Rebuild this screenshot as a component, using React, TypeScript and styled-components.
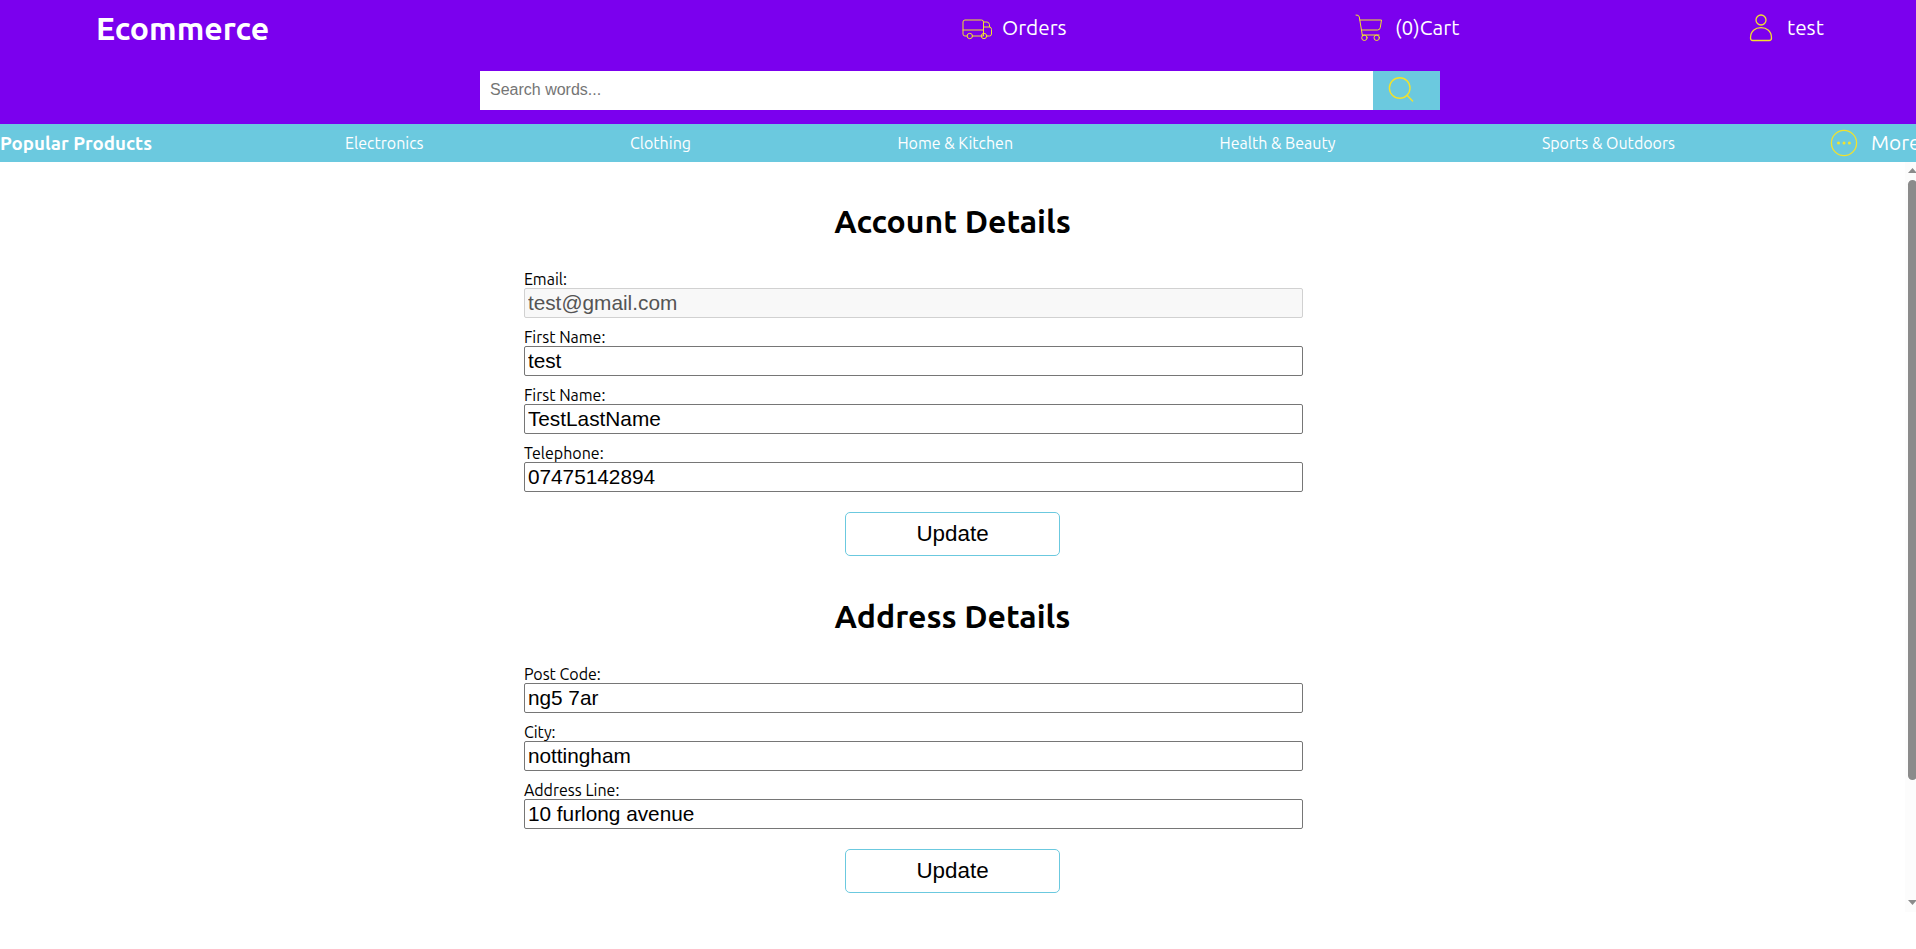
import React from "react";
import styled, { createGlobalStyle } from "styled-components";

const purple = "#7b00ee";
const sky = "#6bc9df";
const yellow = "#f2e22c";

const GlobalStyle = createGlobalStyle`
  * { box-sizing: border-box; }
  body {
    margin: 0;
    background: #fff;
    overflow: hidden;
    font-family: Ubuntu, "Noto Sans", sans-serif;
    font-size: 16px;
  }
`;

const Page = styled.div`
  display: flex;
  flex-direction: column;
  height: 100vh;
  overflow: hidden;
`;

const Header = styled.header`
  height: 124px;
  flex: none;
  background: ${purple};
  color: #fff;
`;

const TopRow = styled.div`
  display: grid;
  grid-template-columns: 865px 393px 395px auto;
  height: 71px;
  padding: 10px 0 0 96px;
`;

const Brand = styled.h1`
  margin: 0;
  font-size: 32px;
  line-height: 36px;
  font-weight: bold;
`;

const HeaderLink = styled.a<{ $gap: number }>`
  display: flex;
  align-items: center;
  gap: ${(p) => p.$gap}px;
  height: 36px;
  font-size: 20.8px;
  line-height: 24px;
`;

const Icon = styled.svg<{ $stroke?: number }>`
  display: block;
  flex: none;
  fill: none;
  stroke: ${yellow};
  stroke-width: ${(p) => p.$stroke ?? 1};
  stroke-linecap: round;
  stroke-linejoin: round;
`;

const SearchForm = styled.form`
  display: flex;
  width: 960px;
  height: 39px;
  margin: 0 0 0 480px;
`;

const SearchInput = styled.input`
  flex: 1;
  border: 0;
  padding: 0 10px 1px;
  background: #fff;
  font: 16px "Liberation Sans", Arial, sans-serif;
  outline: none;
  &::placeholder { color: #757575; }
`;

const SearchButton = styled.button`
  display: flex;
  align-items: center;
  width: 67px;
  border: 0;
  padding: 0 0 2px 14px;
  background: ${sky};
`;

const CategoryBar = styled.nav`
  display: flex;
  align-items: center;
  flex: none;
  height: 38px;
  background: ${sky};
  color: #fff;
  white-space: nowrap;
`;

const PopularTitle = styled.h3`
  flex: none;
  width: 345px;
  margin: 0;
  padding-top: 2px;
  font-size: 18.72px;
  line-height: 22px;
`;

const CategoryList = styled.div`
  display: flex;
  justify-content: space-between;
  flex: none;
  width: 1330px;
  line-height: 18px;
`;

const MoreLink = styled.a`
  display: flex;
  align-items: center;
  flex: none;
  gap: 13px;
  margin-left: 155px;
  font-size: 20.8px;
  line-height: 24px;
`;

const Viewport = styled.div`
  display: flex;
  flex: none;
  height: 750px;
`;

const Main = styled.main`
  flex: 1;
  display: flex;
  flex-direction: column;
  align-items: center;
`;

const Section = styled.form`
  display: flex;
  flex-direction: column;
  width: 45%;
  padding-top: 41px;
  margin: 0 0 1px;
`;

const SectionTitle = styled.h1`
  margin: 0 0 31px;
  font-size: 32px;
  line-height: 36px;
  text-align: center;
`;

const Field = styled.label`
  display: block;
  height: 48px;
  margin-bottom: 10px;
  line-height: 18px;
`;

const FieldInput = styled.input`
  display: block;
  width: 779px;
  height: 30px;
  border: 1px solid #767676;
  border-radius: 2px;
  padding: 1px 3px;
  background: #fff;
  color: #000;
  font: 20.8px "Liberation Sans", Arial, sans-serif;
  &:disabled {
    border-color: #d1d1d1;
    background: #f8f8f8;
    color: #545454;
  }
`;

const UpdateButton = styled.button`
  align-self: center;
  width: 215px;
  height: 44px;
  margin-top: 10px;
  border: 1px solid ${sky};
  border-radius: 5px;
  padding: 0;
  background: #fff;
  color: #000;
  font: 22.4px "Liberation Sans", Arial, sans-serif;
`;

const ScrollTrack = styled.div`
  display: flex;
  flex-direction: column;
  width: 11px;
  padding: 6px 0 7px 3px;
  background: #fcfcfc;
  overflow: hidden;
`;

const ScrollThumb = styled.div`
  width: 9px;
  height: 600px;
  margin: 7px 0 auto;
  border-radius: 5px;
  background: #8b8b8b;
`;

const ScrollArrow = styled.svg`
  display: block;
  flex: none;
  fill: #8b8b8b;
`;

const TruckIcon = () => (
  <Icon width="32" height="28" viewBox="0 0 32 28">
    <path d="M6 22H4Q2 22 2 20V8Q2 6 4 6H20.5Q22.5 6 22.5 8V22H11.6M2 16H22.5" />
    <path d="M22.5 8H26Q28 8 28.4 10.5L28.7 13M22.5 13H28.7Q30.5 13.4 30.5 15.5V20Q30.5 22 28.5 22H26" />
    <circle cx="8.8" cy="22" r="2.7" />
    <circle cx="23" cy="22" r="2.7" />
  </Icon>
);

const CartIcon = () => (
  <Icon width="31" height="32" viewBox="0 0 31 32">
    <path d="M2 3Q5 2.6 5.3 5L8.4 23.6M6 8H27.5L26.3 15.5Q26 18 23.5 18H7.5M8.4 23H25" />
    <circle cx="10.4" cy="25.8" r="2.7" />
    <circle cx="22.7" cy="25.8" r="2.7" />
  </Icon>
);

const UserIcon = () => (
  <Icon $stroke={1.3} width="24" height="30" viewBox="0 0 24 30">
    <circle cx="12" cy="7" r="5" />
    <path d="M1.5 25C1.5 18.2 6.2 14.7 12 14.7S22.5 18.2 22.5 25Q22.5 27.5 20.2 27.5H3.8Q1.5 27.5 1.5 25Z" />
  </Icon>
);

const SearchIcon = () => (
  <Icon $stroke={1.4} width="28" height="28" viewBox="0 0 28 28">
    <circle cx="12.7" cy="12" r="10.3" />
    <path d="M20 19.2L25.6 25" />
  </Icon>
);

const MoreIcon = () => (
  <Icon $stroke={1.3} width="28" height="28" viewBox="0 0 28 28">
    <circle cx="14" cy="14" r="12.6" />
    <g fill={yellow} stroke="none">
      <circle cx="8.5" cy="14" r="1.5" />
      <circle cx="14" cy="14" r="1.5" />
      <circle cx="19.4" cy="14" r="1.5" />
    </g>
  </Icon>
);

const categories = ["Electronics", "Clothing", "Home & Kitchen", "Health & Beauty", "Sports & Outdoors"];

type FieldData = { label: string; value: string; disabled?: boolean };

const accountFields: FieldData[] = [
  { label: "Email:", value: "test@gmail.com", disabled: true },
  { label: "First Name:", value: "test" },
  { label: "First Name:", value: "TestLastName" },
  { label: "Telephone:", value: "07475142894" },
];

const addressFields: FieldData[] = [
  { label: "Post Code:", value: "ng5 7ar" },
  { label: "City:", value: "nottingham" },
  { label: "Address Line:", value: "10 furlong avenue" },
];

const DetailsForm = ({ title, fields }: { title: string; fields: FieldData[] }) => (
  <Section>
    <SectionTitle>{title}</SectionTitle>
    {fields.map((f, i) => (
      <Field key={i}>
        {f.label}
        <FieldInput defaultValue={f.value} disabled={f.disabled} />
      </Field>
    ))}
    <UpdateButton type="button">Update</UpdateButton>
  </Section>
);

export default function App() {
  return (
    <Page>
      <GlobalStyle />
      <Header>
        <TopRow>
          <Brand>Ecommerce</Brand>
          <HeaderLink $gap={9}><TruckIcon />Orders</HeaderLink>
          <HeaderLink $gap={10}><CartIcon />(0)Cart</HeaderLink>
          <HeaderLink $gap={14}><UserIcon />test</HeaderLink>
        </TopRow>
        <SearchForm>
          <SearchInput placeholder="Search words..." />
          <SearchButton type="button"><SearchIcon /></SearchButton>
        </SearchForm>
      </Header>
      <CategoryBar>
        <PopularTitle>Popular Products</PopularTitle>
        <CategoryList>
          {categories.map((c) => <span key={c}>{c}</span>)}
        </CategoryList>
        <MoreLink><MoreIcon />More</MoreLink>
      </CategoryBar>
      <Viewport>
        <Main>
          <DetailsForm title="Account Details" fields={accountFields} />
          <DetailsForm title="Address Details" fields={addressFields} />
        </Main>
        <ScrollTrack>
          <ScrollArrow width="9" height="5" viewBox="0 0 9 5"><path d="M0 5L4.5 0L9 5Z" /></ScrollArrow>
          <ScrollThumb />
          <ScrollArrow width="9" height="5" viewBox="0 0 9 5"><path d="M0 0H9L4.5 5Z" /></ScrollArrow>
        </ScrollTrack>
      </Viewport>
    </Page>
  );
}
